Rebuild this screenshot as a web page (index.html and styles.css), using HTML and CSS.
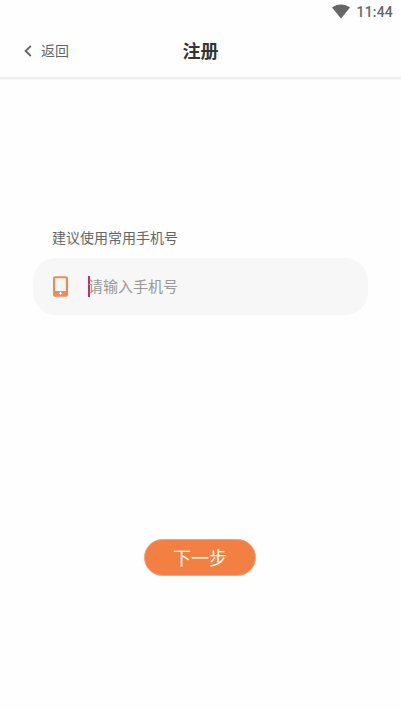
FILE: index.html
```html
<!DOCTYPE html>
<html lang="zh-CN">
<head>
<meta charset="utf-8">
<title>注册</title>
<link rel="stylesheet" href="styles.css">
</head>
<body>
<div class="status">
  <svg class="wifi" viewBox="0 0 20 15"><path d="M10 14.500 1 3.600C6-.6 14-.6 19 3.600Z"/></svg>
  <span>11:44</span>
</div>
<header class="header">
  <a class="back">
    <svg class="chevron" viewBox="0 0 8 12"><path d="M6.800 1 1.600 6l5.200 5"/></svg>
    <span>返回</span>
  </a>
  <h1 class="title">注册</h1>
</header>
<main class="main">
  <p class="hint">建议使用常用手机号</p>
  <div class="field">
    <svg class="phone" viewBox="0 0 15 21"><path fill-rule="evenodd" d="M2 .3h11a2 2 0 0 1 2 2v16.500a2 2 0 0 1-2 2H2a2 2 0 0 1-2-2V2.300a2 2 0 0 1 2-2ZM2.200 2.300v12.700h10.600V2.300Z"/><path class="key" d="M7.500 15.800v3M6 17.300h3"/></svg>
    <span class="caret"></span>
    <span class="placeholder">请输入手机号</span>
  </div>
  <button class="next">下一步</button>
</main>
</body>
</html>
```

FILE: styles.css
```css
* { box-sizing: border-box; }
body {
  margin: 0;
  height: 710px;
  overflow: hidden;
  background: #fefefe;
  color: #666;
  font-family: "Noto Sans CJK SC", sans-serif;
}
.status {
  display: flex;
  align-items: center;
  justify-content: flex-end;
  gap: 5px;
  height: 24px;
  padding-right: 8px;
  font: 500 14px/24px Roboto, sans-serif;
  letter-spacing: 0.2px;
}
.wifi { width: 20px; height: 15px; margin-top: -2px; fill: #666; }
.header {
  display: grid;
  grid-template-columns: 1fr auto 1fr;
  align-items: center;
  height: 55px;
  padding-bottom: 1px;
  border-bottom: 2px solid #eee;
  box-shadow: 0 1px 0 #f7f7f7;
}
.back {
  display: flex;
  align-items: center;
  gap: 9px;
  padding-left: 24px;
  font-size: 14px;
  line-height: 20px;
}
.back span { margin-top: -1px; }
.chevron {
  width: 8px;
  height: 12px;
  margin-top: 1px;
  fill: none;
  stroke: #666;
  stroke-width: 1.8;
}
.title {
  margin: 0;
  color: #333;
  font-size: 18px;
  font-weight: 700;
  line-height: 26px;
}
.main {
  display: flex;
  flex-direction: column;
  padding: 148px 33px 0;
}
.hint {
  margin: 0 0 11px;
  padding-left: 19px;
  font-size: 14px;
  line-height: 20px;
}
.field {
  display: flex;
  align-items: center;
  height: 57px;
  padding-left: 20px;
  border-radius: 23px;
  background: #f7f7f7;
}
.phone { width: 15px; height: 21px; fill: #f28a56; }
.key { fill: none; stroke: #fff; stroke-width: 1.1; }
.caret {
  width: 2px;
  height: 21px;
  margin-left: 20px;
  background: #cc2866;
}
.placeholder {
  margin: -2px 0 0 -2px;
  color: #999;
  font-size: 15px;
  line-height: 22px;
}
.next {
  align-self: center;
  width: 112px;
  height: 37px;
  margin: 224px 1px 0 0;
  padding: 0;
  border: 1px solid #f5a27a;
  border-radius: 19px;
  background: #f47f43;
  color: #fff;
  font: 400 18px/35px "Noto Sans CJK SC", sans-serif;
}
```
